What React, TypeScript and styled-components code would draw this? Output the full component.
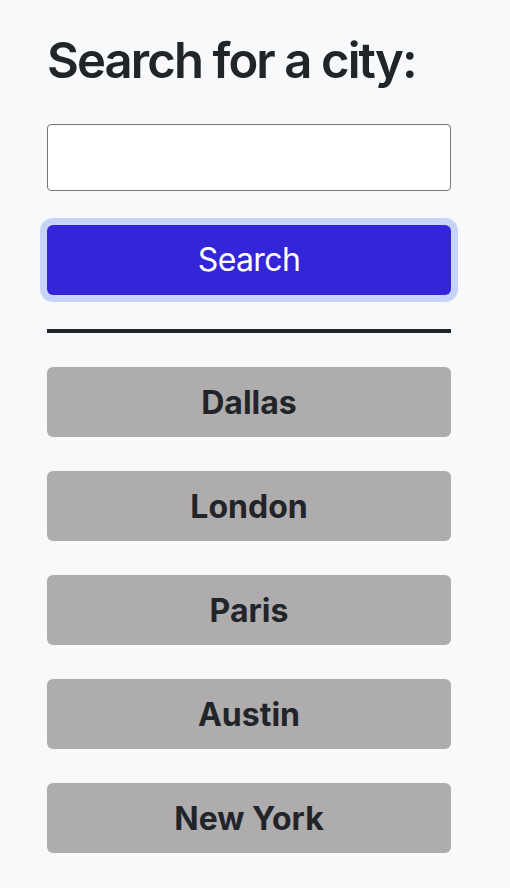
import React from "react";
import styled, { createGlobalStyle } from "styled-components";

const Global = createGlobalStyle`
  html, body { margin: 0; padding: 0; background: #f8f9fa; }
  body { font-family: Inter, "Noto Sans", sans-serif; color: #212529; }
  * { box-sizing: border-box; }
`;

const Page = styled.main`
  width: 404px;
  margin-left: 47px;
  padding-top: 32px;
  display: flex;
  flex-direction: column;
`;

const Heading = styled.h1`
  margin: 0;
  font-size: 49px;
  font-weight: 600;
  line-height: 1.2;
  letter-spacing: -1.9px;
`;

const CityInput = styled.input`
  margin-top: 33px;
  height: 67px;
  width: 100%;
  border: 1.5px solid #767676;
  border-radius: 4px;
  background: #fff;
  font-size: 28px;
  font-family: inherit;
  padding: 0 12px;
  outline: none;
`;

const SearchButton = styled.button`
  margin-top: 34px;
  height: 70px;
  width: 100%;
  border: none;
  border-radius: 6px;
  background: #3425d9;
  color: #fff;
  font-family: inherit;
  font-size: 32px;
  font-weight: 400;
  letter-spacing: -0.6px;
  box-shadow: 0 0 0 7px #c5d4f8;
  cursor: pointer;
`;

const Divider = styled.hr`
  margin: 34px 0 0;
  border: none;
  height: 4px;
  background: #212529;
`;

const CityList = styled.div`
  margin-top: 34px;
  display: flex;
  flex-direction: column;
  gap: 34px;
`;

const CityButton = styled.button`
  height: 70px;
  width: 100%;
  border: none;
  border-radius: 6px;
  background: #aeacad;
  color: #212529;
  font-family: inherit;
  font-size: 32px;
  font-weight: 700;
  padding-top: 2px;
  cursor: pointer;
`;

const cities = ["Dallas", "London", "Paris", "Austin", "New York"];

export default function App() {
  return (
    <>
      <Global />
      <Page>
        <Heading>Search for a city:</Heading>
        <CityInput type="text" />
        <SearchButton>Search</SearchButton>
        <Divider />
        <CityList>
          {cities.map((c) => (
            <CityButton key={c}>{c}</CityButton>
          ))}
        </CityList>
      </Page>
    </>
  );
}
